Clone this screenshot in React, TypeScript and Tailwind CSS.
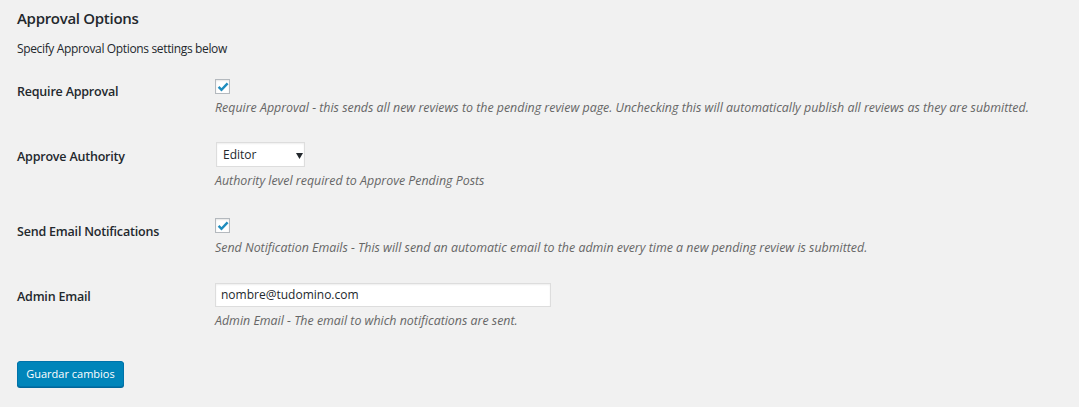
import React from "react";

function Check() {
  return (
    <span className="flex h-[15px] w-[15px] items-center justify-center border border-[#b4b9be] bg-white shadow-[inset_0_1px_2px_rgba(0,0,0,0.1)]">
      <svg width="12" height="12" viewBox="0 0 12 12">
        <path d="M1.6 5.8 L4.5 8.8 L10.6 2.4" fill="none" stroke="#1e8cbe" strokeWidth="2.4" />
      </svg>
    </span>
  );
}

export default function App() {
  return (
    <div className="min-h-[407px] w-[1079px] bg-[#f1f1f1] text-[#23282d]" style={{ fontFamily: '"Open Sans", "Noto Sans", sans-serif' }}>
      <div className="px-[17px] pt-[8px]">
        <h2 className="text-[15px] font-semibold leading-[20px] tracking-[-0.3px]">Approval Options</h2>
        <p className="mt-[12px] text-[12px] leading-[18px] tracking-[-0.35px]">Specify Approval Options settings below</p>

        <div className="mt-[6px] grid grid-cols-[198px_1fr]">
          <div className="pt-[19px] text-[12.5px] font-semibold leading-[18px] tracking-[-0.2px]">Require Approval</div>
          <div className="pt-[15px] pb-[13px]">
            <Check />
            <p className="mt-[5px] text-[12.4px] italic leading-[18px] text-[#666]">
              Require Approval - this sends all new reviews to the pending review page. Unchecking this will automatically publish all reviews as they are submitted.
            </p>
          </div>

          <div className="pt-[18px] text-[12.5px] font-semibold leading-[18px] tracking-[-0.2px]">Approve Authority</div>
          <div className="pt-[12px] pb-[14px]">
            <div className="relative ml-[1px] flex h-[25px] w-[89px] items-center border border-[#ddd] bg-white pl-[6px] text-[12px] shadow-[inset_0_1px_2px_rgba(0,0,0,0.07)]">
              Editor
              <svg className="absolute left-[79px] top-[10px]" width="7" height="6" viewBox="0 0 7 6">
                <path d="M0 0 H7 L3.5 6 Z" fill="#23282d" />
              </svg>
            </div>
            <p className="mt-[5px] text-[12.4px] italic leading-[18px] text-[#666]">Authority level required to Approve Pending Posts</p>
          </div>

          <div className="pt-[19px] text-[12.5px] font-semibold leading-[18px] tracking-[-0.2px]">Send Email Notifications</div>
          <div className="pt-[14px] pb-[12px]">
            <Check />
            <p className="mt-[6px] text-[12.4px] italic leading-[18px] text-[#666]">
              Send Notification Emails - This will send an automatic email to the admin every time a new pending review is submitted.
            </p>
          </div>

          <div className="pt-[19px] text-[12.5px] font-semibold leading-[18px] tracking-[-0.2px]">Admin Email</div>
          <div className="pt-[14px] pb-[14px]">
            <div className="flex h-[24px] w-[336px] items-center border border-[#ddd] bg-white pl-[5px] text-[12px] shadow-[inset_0_1px_2px_rgba(0,0,0,0.07)]">
              nombre@tudomino.com
            </div>
            <p className="mt-[5px] text-[12.4px] italic leading-[18px] text-[#666]">Admin Email - The email to which notifications are sent.</p>
          </div>
        </div>

        <div className="mt-[16px]">
          <button className="h-[26px] w-[107px] rounded-[3px] border border-[#0073aa] bg-[#0085ba] text-[11px] leading-[24px] text-white shadow-[0_1px_0_#006799]">
            Guardar cambios
          </button>
        </div>
      </div>
    </div>
  );
}
